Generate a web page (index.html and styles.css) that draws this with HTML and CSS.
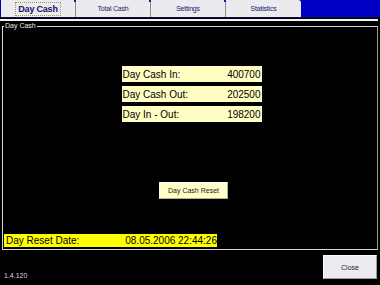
FILE: index.html
```html
<!DOCTYPE html>
<html>
<head>
    <title>Day Cash</title>
    <link rel="stylesheet" href="styles.css">
</head>
<body>
    <div class="tabs">
        <div class="tab active"><span class="focus">Day Cash</span></div>
        <div class="tab">Total Cash</div>
        <div class="tab">Settings</div>
        <div class="tab">Statistics</div>
    </div>
    <div class="tab-line"></div>

    <fieldset class="group">
        <legend>Day Cash</legend>

        <div class="rows">
            <div class="row"><span>Day Cash In:</span><span>400700</span></div>
            <div class="row"><span>Day Cash Out:</span><span>202500</span></div>
            <div class="row"><span>Day In - Out:</span><span>198200</span></div>
        </div>

        <button class="reset">Day Cash Reset</button>

        <div class="reset-date"><span>Day Reset Date:</span><span>08.05.2006 22:44:26</span></div>
    </fieldset>

    <div class="footer">
        <div class="version">1.4.120</div>
        <button class="close">Close</button>
    </div>
</body>
</html>
```

FILE: styles.css
```css
body {
    margin: 0;
    width: 380px;
    height: 285px;
    background: #000;
    font-family: "Liberation Sans", Arial, sans-serif;
    overflow: hidden;
}

/* tab strip */
.tabs {
    display: flex;
    height: 17px;
    padding-left: 1px;
    background: #0000c4;
    border-bottom: 1px solid #101040;
}

.tab {
    position: relative;
    width: 74px;
    display: flex;
    align-items: center;
    justify-content: center;
    background: #ebebef;
    border-right: 1px solid #8a8a96;
    color: #1a1a70;
    font-size: 7px;
    letter-spacing: -0.2px;
}

.tab:last-child {
    width: 75px;
    border-right: none;
    border-top-right-radius: 3px;
}

.tab::before {
    content: "";
    position: absolute;
    right: -2px;
    top: 0;
    width: 3px;
    height: 2px;
    background: #1a1a9a;
}

.tab:last-child::before {
    display: none;
}

.tab.active {
    font-size: 9px;
    font-weight: bold;
    color: #10106a;
}

.focus {
    padding: 1px 2px;
    border: 1px dotted #9a9a50;
}

.tab-line {
    height: 2px;
    margin-top: 1px;
    margin-right: 2px;
    background: #f4f4f4;
}

/* group box */
.group {
    margin: 1px 2px 0 2px;
    height: 226px;
    padding: 0;
    border: 1px solid #d8d8d8;
    border-right-color: #9a9a9a;
    display: flex;
    flex-direction: column;
    align-items: center;
}

.group legend {
    padding: 0 1px;
    margin-left: 1px;
    color: #e8e8e8;
    font-size: 7px;
    line-height: 8px;
}

.rows {
    margin-top: 36px;
    margin-left: 3px;
    display: flex;
    flex-direction: column;
    gap: 4px;
}

.row {
    width: 140px;
    height: 16px;
    display: flex;
    justify-content: space-between;
    align-items: center;
    padding: 0 1px;
    box-sizing: border-box;
    background: #ffffc4;
    color: #000;
    font-size: 10px;
}

.reset {
    margin-top: 60px;
    margin-left: 7px;
    width: 69px;
    height: 17px;
    padding: 0;
    background: #ffffc8;
    border: 1px solid #f8f8f0;
    border-right-color: #b0b090;
    border-bottom-color: #b0b090;
    color: #202020;
    font-family: "Liberation Sans", Arial, sans-serif;
    font-size: 7px;
}

.reset-date {
    align-self: flex-start;
    margin-top: 35px;
    margin-left: 1px;
    width: 213px;
    height: 13px;
    display: flex;
    justify-content: space-between;
    align-items: center;
    padding: 0 0 0 2px;
    box-sizing: border-box;
    background: #ffff00;
    color: #000;
    font-size: 10px;
}

/* bottom bar */
.footer {
    display: flex;
    justify-content: space-between;
    align-items: flex-start;
    padding: 5px 3px 0 4px;
}

.version {
    margin-top: 17px;
    color: #d8d8d8;
    font-size: 7px;
}

.close {
    width: 54px;
    height: 24px;
    padding: 0;
    background: #ececf0;
    border: 1px solid #ffffff;
    border-right-color: #9a9aa4;
    border-bottom-color: #9a9aa4;
    color: #202030;
    font-family: "Liberation Sans", Arial, sans-serif;
    font-size: 7px;
}
```
